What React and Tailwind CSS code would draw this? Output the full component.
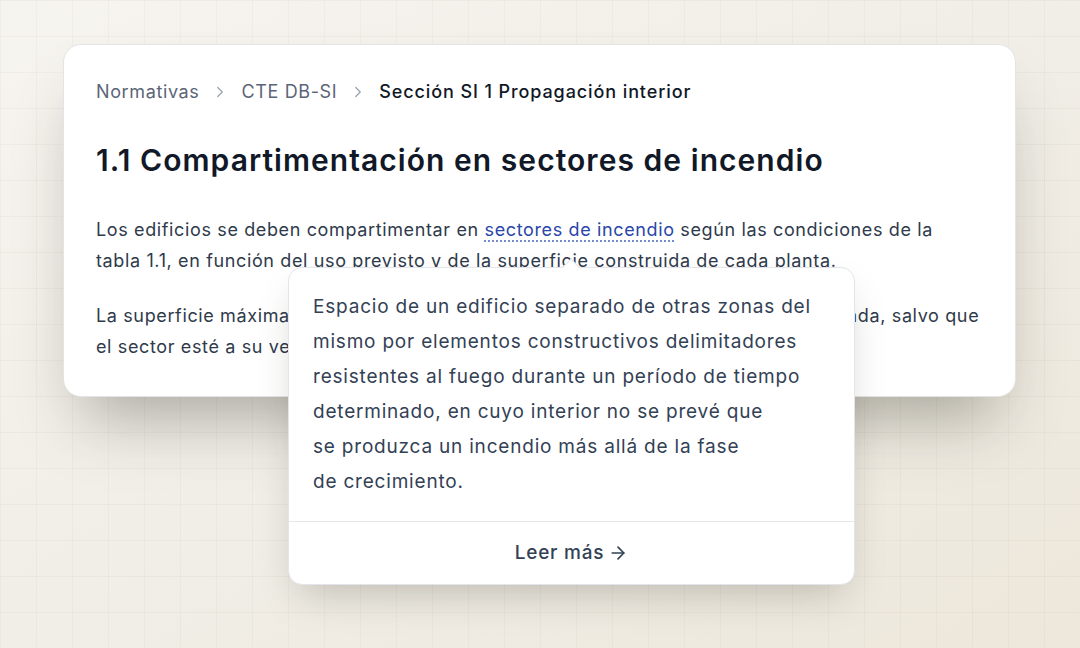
import React from 'react';
import { ChevronRight, ArrowRight } from 'lucide-react';

const font = { fontFamily: 'Inter, "Noto Sans", sans-serif' };

const Breadcrumb = () => (
  <nav className="flex items-center gap-3 text-[18px] leading-7 tracking-[0.035em]">
    <span className="text-[#5b6577]">Normativas</span>
    <ChevronRight className="h-[18px] w-[18px] text-[#9aa3b2]" strokeWidth={1.75} />
    <span className="text-[#5b6577]">CTE DB-SI</span>
    <ChevronRight className="h-[18px] w-[18px] text-[#9aa3b2]" strokeWidth={1.75} />
    <span className="font-medium tracking-[0.05em] text-[#111827]">Sección SI 1 Propagación interior</span>
  </nav>
);

const Tooltip = () => (
  <div className="absolute left-[288px] top-[267px] w-[567px] rounded-[14px] border border-[#e3e5ea] bg-white shadow-[0_18px_40px_-12px_rgba(30,30,20,0.25)]">
    {/* caret */}
    <div className="absolute -top-[7px] left-[276px] h-3 w-3 rotate-45 border-l border-t border-[#e3e5ea] bg-white" />
    <p className="px-6 pb-[22px] pt-[21px] text-[19px] leading-[35px] tracking-[0.042em] text-[#334155]">
      Espacio de un edificio separado de otras zonas del
      <br />
      mismo por elementos constructivos delimitadores
      <br />
      resistentes al fuego durante un período de tiempo
      <br />
      determinado, en cuyo interior no se prevé que
      <br />
      se produzca un incendio más allá de la fase
      <br />
      de crecimiento.
    </p>
    <div className="flex h-[63px] items-center justify-center gap-1 border-t border-[#e5e7eb] text-[19px] font-medium tracking-[0.04em] text-[#334155]">
      <span>Leer más</span>
      <ArrowRight className="h-5 w-5" strokeWidth={2} />
    </div>
  </div>
);

export default function App() {
  return (
    <div
      className="relative h-[648px] w-[1080px] overflow-hidden bg-gradient-to-br from-[#f6f4ef] via-[#f1eee7] to-[#ede7db]"
      style={font}
    >
      <div className="absolute inset-0 bg-[linear-gradient(to_right,rgba(120,110,80,0.05)_1px,transparent_1px),linear-gradient(to_bottom,rgba(120,110,80,0.05)_1px,transparent_1px)] bg-[size:36px_36px]" />

      <div className="relative pl-[63px] pt-[44px]">
        <div className="w-[953px] rounded-[18px] border border-[#e4e4e4] bg-white px-8 pb-[34px] pt-[33px] shadow-[0_40px_60px_-20px_rgba(40,40,30,0.35)]">
          <Breadcrumb />
          <h1 className="mt-9 text-[30px] font-semibold leading-9 tracking-[0.035em] text-[#111827]">
            1.1 Compartimentación en sectores de incendio
          </h1>
          <p className="mt-9 text-[18px] leading-[31px] tracking-[0.035em] text-[#2f3a4b]">
            Los edificios se deben compartimentar en{' '}
            <span className="text-[#2a46a8] underline decoration-dotted decoration-[#6a7fc8] underline-offset-[5px]">
              sectores de incendio
            </span>{' '}
            según las condiciones de la tabla 1.1, en función del uso previsto y de la superficie
            construida de cada planta.
          </p>
          <p className="mt-6 text-[18px] leading-[31px] tracking-[0.035em] text-[#2f3a4b]">
            La superficie máxima construida de ese sector no debe exceder la que se recomienda, salvo que
            el sector esté a su vez protegido con una instalación automática de extinción.
          </p>
        </div>
      </div>

      <Tooltip />
    </div>
  );
}
